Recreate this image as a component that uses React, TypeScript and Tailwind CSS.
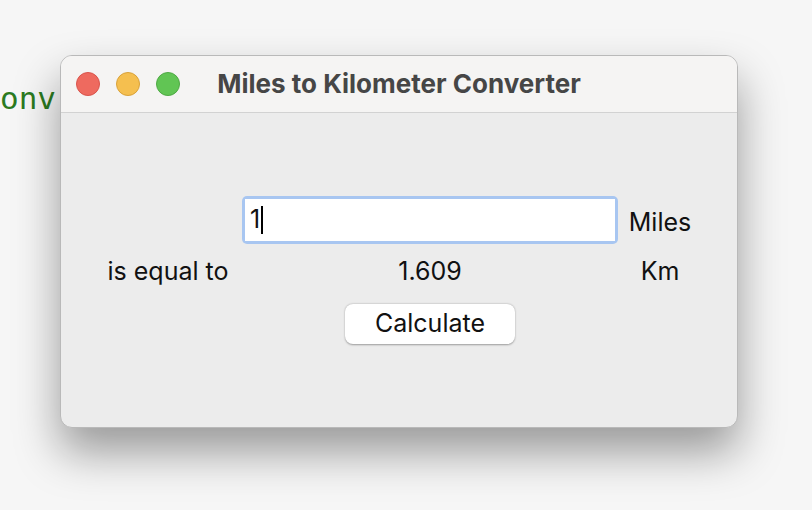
import { useState } from 'react';

const font = { fontFamily: 'Inter, "Liberation Sans", sans-serif' };

export default function App() {
  const [miles, setMiles] = useState('1');
  const [km, setKm] = useState('1.609');

  const calculate = () => {
    const value = parseFloat(miles);
    setKm(isNaN(value) ? '' : (value * 1.609).toFixed(3).replace(/\.?0+$/, ''));
  };

  return (
    <div className="relative h-[510px] w-[812px] overflow-hidden bg-[#f6f6f6]" style={font}>
      <div className="absolute left-0 top-[83px] font-['DejaVu_Sans_Mono',monospace] text-[31px] leading-none text-[#2b7a1f]">
        onv
      </div>

      <div className="absolute left-[60px] top-[55px] flex h-[373px] w-[678px] flex-col overflow-hidden rounded-[12px] border border-[#b9b9b9] bg-[#ececec] shadow-[0_24px_45px_rgba(0,0,0,0.38)]">
        <div className="relative flex h-[57px] shrink-0 items-center border-b border-[#d2d2d2] bg-[#f5f4f3]">
          <div className="flex items-center gap-[16px] pl-[15px]">
            <span className="h-[24px] w-[24px] rounded-full border border-[#d9544c] bg-[#ee6a5f]" />
            <span className="h-[24px] w-[24px] rounded-full border border-[#d9a23a] bg-[#f5bf4f]" />
            <span className="h-[24px] w-[24px] rounded-full border border-[#4fa944] bg-[#61c554]" />
          </div>
          <div className="absolute inset-0 flex items-center justify-center pb-[2px] text-[26px] font-bold text-[#464646]">
            Miles to Kilometer Converter
          </div>
        </div>

        <div className="grid grid-cols-[134px_376px_70px] gap-x-[7px] pl-[40px] pt-[83px] text-[25px] text-[#111]">
          <div />
          <div className="flex h-[48px] items-center rounded-[5px] bg-[#a8c6f1] p-[3px]">
            <div className="flex h-full w-full items-center bg-white pl-[5px]">
              <span>{miles}</span>
              <span className="ml-[1px] h-[28px] w-[2px] bg-black" />
              <input
                value=""
                onChange={(e) => setMiles(miles + e.target.value)}
                className="h-full min-w-0 flex-1 bg-transparent outline-none"
              />
            </div>
          </div>
          <div className="flex items-center justify-center pt-[6px]">Miles</div>

          <div className="flex h-[56px] items-center justify-center">is equal to</div>
          <div className="flex items-center justify-center">{km}</div>
          <div className="flex items-center justify-center">Km</div>

          <div />
          <div className="flex justify-center pt-[4px]">
            <button
              onClick={calculate}
              className="h-[40px] w-[170px] rounded-[8px] bg-white text-[25px] text-[#111] shadow-[0_0.5px_2px_rgba(0,0,0,0.35)]"
            >
              Calculate
            </button>
          </div>
          <div />
        </div>
      </div>
    </div>
  );
}
